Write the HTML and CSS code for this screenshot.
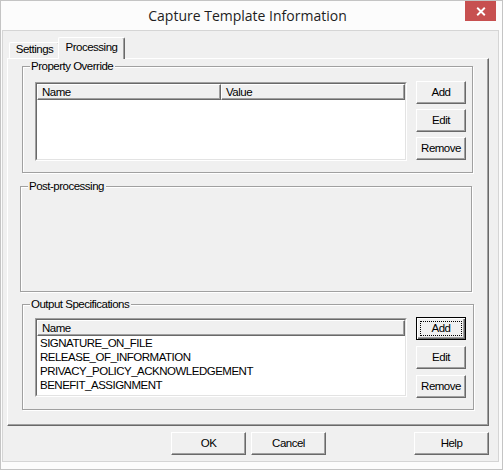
FILE: index.html
```html
<!DOCTYPE html>
<html>
<head>
<meta charset="utf-8">
<title>Capture Template Information</title>
<link rel="stylesheet" href="styles.css">
</head>
<body>
<div class="window">
  <div class="titlebar">
    <div class="title">Capture Template Information</div>
    <div class="close">
      <svg width="10" height="9" viewBox="0 0 10 9"><path d="M1.2 0.8 L8.8 8.2 M8.8 0.8 L1.2 8.2" stroke="#fff" stroke-width="1.9" fill="none"/></svg>
    </div>
  </div>
  <div class="client">
    <div class="tabs">
      <div class="tab">Settings</div>
      <div class="tab active">Processing</div>
    </div>
    <div class="panel">
      <div class="group g1">
        <div class="group-title">Property Override</div>
        <div class="group-body body1">
          <div class="list">
            <div class="list-inner">
              <div class="list-header">
                <div class="col half">Name</div>
                <div class="col half">Value</div>
              </div>
            </div>
          </div>
          <div class="btns btns1">
            <button class="btn">Add</button>
            <button class="btn">Edit</button>
            <button class="btn">Remove</button>
          </div>
        </div>
      </div>
      <div class="group g2">
        <div class="group-title">Post-processing</div>
      </div>
      <div class="group g3">
        <div class="group-title">Output Specifications</div>
        <div class="group-body body3">
          <div class="list">
            <div class="list-inner">
              <div class="list-header">
                <div class="col full">Name</div>
              </div>
              <div class="rows">
                <div class="row">SIGNATURE_ON_FILE</div>
                <div class="row">RELEASE_OF_INFORMATION</div>
                <div class="row">PRIVACY_POLICY_ACKNOWLEDGEMENT</div>
                <div class="row">BENEFIT_ASSIGNMENT</div>
              </div>
            </div>
          </div>
          <div class="btns btns3">
            <button class="btn default">Add</button>
            <button class="btn">Edit</button>
            <button class="btn">Remove</button>
          </div>
        </div>
      </div>
    </div>
    <div class="footer">
      <button class="btn wide ok">OK</button>
      <button class="btn wide cancel">Cancel</button>
      <button class="btn wide help">Help</button>
    </div>
  </div>
</div>
</body>
</html>
```
FILE: styles.css
```css
* { box-sizing: border-box; }
html, body { margin: 0; padding: 0; }
body {
  background: #fcfcfc;
  font-family: "Liberation Sans", Arial, sans-serif;
  font-size: 11.5px;
  letter-spacing: -0.5px;
  color: #000;
}
.window {
  width: 503px;
  height: 470px;
  border: 1px solid #c4c4c4;
  background: #fcfcfc;
  padding: 0 3px 7px 1px;
  display: flex;
  flex-direction: column;
}
.titlebar {
  height: 29px;
  display: flex;
  align-items: flex-start;
  padding-left: 28px;
}
.title {
  flex: 1;
  text-align: center;
  font-family: "Open Sans", "Noto Sans", sans-serif;
  font-size: 14px;
  letter-spacing: 0;
  line-height: 29px;
  color: #1e1e1e;
}
.close {
  width: 31px;
  height: 20px;
  margin-right: 3px;
  background: #c75050;
  display: flex;
  align-items: center;
  justify-content: center;
}
.client {
  flex: 1;
  border: 1px solid #d5d5d5;
  background: #f0f0f0;
  padding: 6px 9px 0 4px;
  display: flex;
  flex-direction: column;
}
.tabs {
  height: 21px;
  display: flex;
  align-items: flex-end;
  padding-left: 2px;
}
.tab {
  width: 51px;
  height: 16px;
  background: #f0f0f0;
  border: 1px solid;
  border-color: #fff #696969 transparent #fff;
  border-bottom: none;
  border-radius: 2px 2px 0 0;
  box-shadow: inset -1px 0 0 #a0a0a0;
  text-align: center;
  line-height: 13px;
  padding-top: 0;
}
.tab.active {
  width: 67px;
  height: 22px;
  margin-left: -2px;
  margin-bottom: -1px;
  padding-top: 3px;
  position: relative;
  z-index: 1;
}
.panel {
  height: 368px;
  border: 1px solid;
  border-color: #fff #696969 #696969 #fff;
  box-shadow: inset -1px -1px 0 #a0a0a0;
  padding-top: 7px;
  display: flex;
  flex-direction: column;
}
.group {
  border: 1px solid #a0a0a0;
  box-shadow: inset 1px 1px 0 #fff, 1px 1px 0 #fff;
  display: flex;
  flex-direction: column;
}
.g1 { margin-left: 14px; width: 451px; height: 107px; }
.g2 { margin-left: 12px; width: 452px; height: 106px; margin-top: 13px; }
.g3 { margin-left: 14px; width: 452px; height: 106px; margin-top: 12px; }
.group-title {
  align-self: flex-start;
  margin: -8px 0 0 7px;
  padding: 0 2px 0 1px;
  line-height: 14px;
  background: #f0f0f0;
}
.group-body {
  display: flex;
  align-items: flex-start;
  padding-left: 12px;
  gap: 9px;
}
.body1 { margin-top: 9px; }
.body3 { margin-top: 7px; }
.list {
  width: 372px;
  height: 79px;
  border: 1px solid;
  border-color: #a0a0a0 #fff #fff #a0a0a0;
  background: #fff;
}
.list-inner {
  height: 100%;
  border: 1px solid;
  border-color: #696969 #e3e3e3 #e3e3e3 #696969;
  overflow: hidden;
}
.list-header {
  display: flex;
  height: 16px;
}
.col {
  height: 16px;
  background: #f0f0f0;
  border: 1px solid;
  border-color: #fff #696969 #696969 #fff;
  box-shadow: inset -1px -1px 0 #a0a0a0;
  padding-left: 4px;
  display: flex;
  align-items: center;
  line-height: 13px;
}
.col.half { width: 184px; }
.col.full { width: 100%; }
.rows { padding-left: 3px; }
.row { line-height: 14px; white-space: nowrap; }
.btns {
  display: flex;
  flex-direction: column;
  margin-top: -1px;
}
.btns1 { gap: 5px; }
.btns3 { gap: 6px; }
.btn {
  width: 50px;
  height: 23px;
  padding: 0;
  margin: 0;
  background: #f0f0f0;
  border: 1px solid;
  border-color: #fff #696969 #696969 #fff;
  box-shadow: inset -1px -1px 0 #a0a0a0;
  font-family: "Liberation Sans", Arial, sans-serif;
  font-size: 11.5px;
  letter-spacing: -0.5px;
  line-height: 13px;
  color: #000;
  text-align: center;
}
.btn.default {
  border-color: #000;
  box-shadow: inset 1px 1px 0 #fff, inset -1px -1px 0 #696969, inset -2px -2px 0 #a0a0a0;
  outline: 1px dotted #000;
  outline-offset: -5px;
}
.footer {
  display: flex;
  margin-top: 6px;
}
.btn.wide { width: 75px; }
.ok { margin-left: 164px; }
.cancel { margin-left: 5px; }
.help { margin-left: auto; }
```
